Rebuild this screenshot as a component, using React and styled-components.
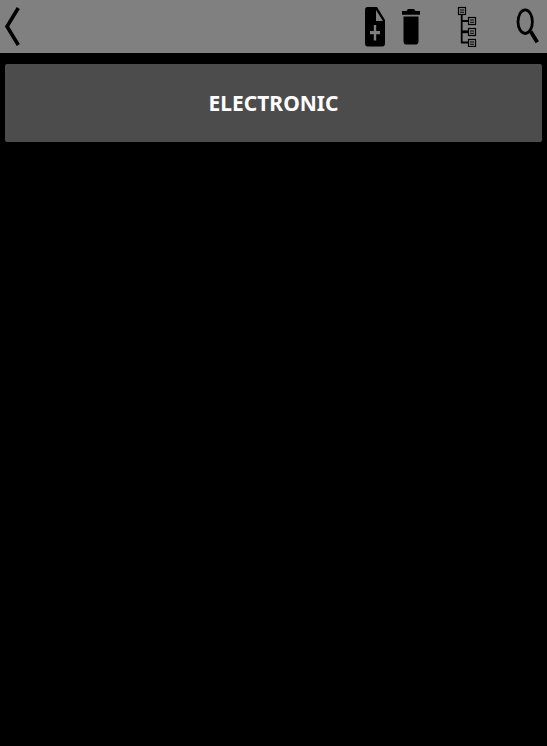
import React from "react";
import styled, { createGlobalStyle } from "styled-components";

const GlobalStyle = createGlobalStyle`
  *, *::before, *::after {
    box-sizing: border-box;
  }

  body {
    margin: 0;
    background: #000;
    color: #fff;
    font-family: "Noto Sans", sans-serif;
  }
`;

const Toolbar = styled.header`
  display: flex;
  justify-content: space-between;
  height: 53px;
  padding-bottom: 1px;
  background: #808080;
`;

const Actions = styled.div`
  display: flex;
  padding-right: 1px;
`;

const IconButton = styled.button`
  display: flex;
  align-items: center;
  justify-content: center;
  width: ${({ $compact }) => ($compact ? 24 : 36)}px;
  margin: 0 0 0 ${({ $gap }) => $gap || 0}px;
  padding: 0;
  border: 0;
  background: transparent;
  color: #000;
  cursor: pointer;
`;

const Icon = styled.svg`
  display: block;
  width: 24px;
  height: 42px;
  fill: currentColor;
`;

const CategoryList = styled.main`
  display: flex;
  flex-direction: column;
  gap: 10px;
  padding: 11px 5px;
`;

const CategoryButton = styled.button`
  height: 78px;
  border: 0;
  border-radius: 2px;
  background: #4c4c4c;
  color: #fff;
  font: 700 21px/28px "Noto Sans", sans-serif;
  cursor: pointer;
`;

const BackIcon = () => (
  <Icon viewBox="0 0 24 42" aria-hidden="true">
    <path d="M18.3 3 7 21.5 18.3 40" fill="none" stroke="currentColor" strokeWidth="3.6" />
  </Icon>
);

const AddFileIcon = () => (
  <Icon viewBox="0 0 24 42" aria-hidden="true">
    <path
      fillRule="evenodd"
      d="M4.5 2H14L22 15V38Q22 41.5 19.5 41.5H4.5Q2 41.5 2 38V5Q2 2 4.5 2ZM13 5V16H20ZM10.8 20V26H7V29.2H10.8V35.5H13.2V29.2H17V26H13.2V20Z"
    />
  </Icon>
);

const TrashIcon = () => (
  <Icon viewBox="0 0 24 42" aria-hidden="true">
    <path d="M3 6H7.5L9 4H15L16.5 6H21V9.7H3ZM4.5 11.5H19.5V36Q19.5 39.5 17 39.5H7Q4.5 39.5 4.5 36Z" />
  </Icon>
);

const nodes = [[3.5, 2.5], [13.5, 12.5], [13.5, 23.5], [13.5, 34.5]];

const TreeIcon = () => (
  <Icon viewBox="0 0 24 42" aria-hidden="true">
    <g fill="none" stroke="currentColor">
      <path d="M6.7 10V37.7" strokeWidth="1.8" />
      <path d="M6 16H13.5M6 37.5H13.5" strokeWidth="2" />
      <path d="M6 26.8H13.5" strokeWidth="2.8" />
      {nodes.map(([x, y]) => (
        <g key={y} transform={`translate(${x} ${y})`}>
          <rect width="7" height="7" strokeWidth="1.2" />
          <path d="M1.5 2.5H5.5M1.5 4.7H5.5" strokeWidth="1.1" />
        </g>
      ))}
    </g>
  </Icon>
);

const SearchIcon = () => (
  <Icon viewBox="0 0 24 42" aria-hidden="true">
    <g fill="none" stroke="currentColor">
      <ellipse cx="9.2" cy="16.7" rx="7.2" ry="11.8" strokeWidth="2.8" />
      <path d="M14.7 26.5 21.3 37.2" strokeWidth="3.8" />
    </g>
  </Icon>
);

export default function App() {
  return (
    <>
      <GlobalStyle />
      <Toolbar>
        <IconButton type="button" aria-label="Back" $compact>
          <BackIcon />
        </IconButton>
        <Actions>
          <IconButton type="button" aria-label="Add file">
            <AddFileIcon />
          </IconButton>
          <IconButton type="button" aria-label="Delete">
            <TrashIcon />
          </IconButton>
          <IconButton type="button" aria-label="Tree view" $gap={20}>
            <TreeIcon />
          </IconButton>
          <IconButton type="button" aria-label="Search" $gap={25}>
            <SearchIcon />
          </IconButton>
        </Actions>
      </Toolbar>
      <CategoryList>
        <CategoryButton type="button">ELECTRONIC</CategoryButton>
      </CategoryList>
    </>
  );
}
